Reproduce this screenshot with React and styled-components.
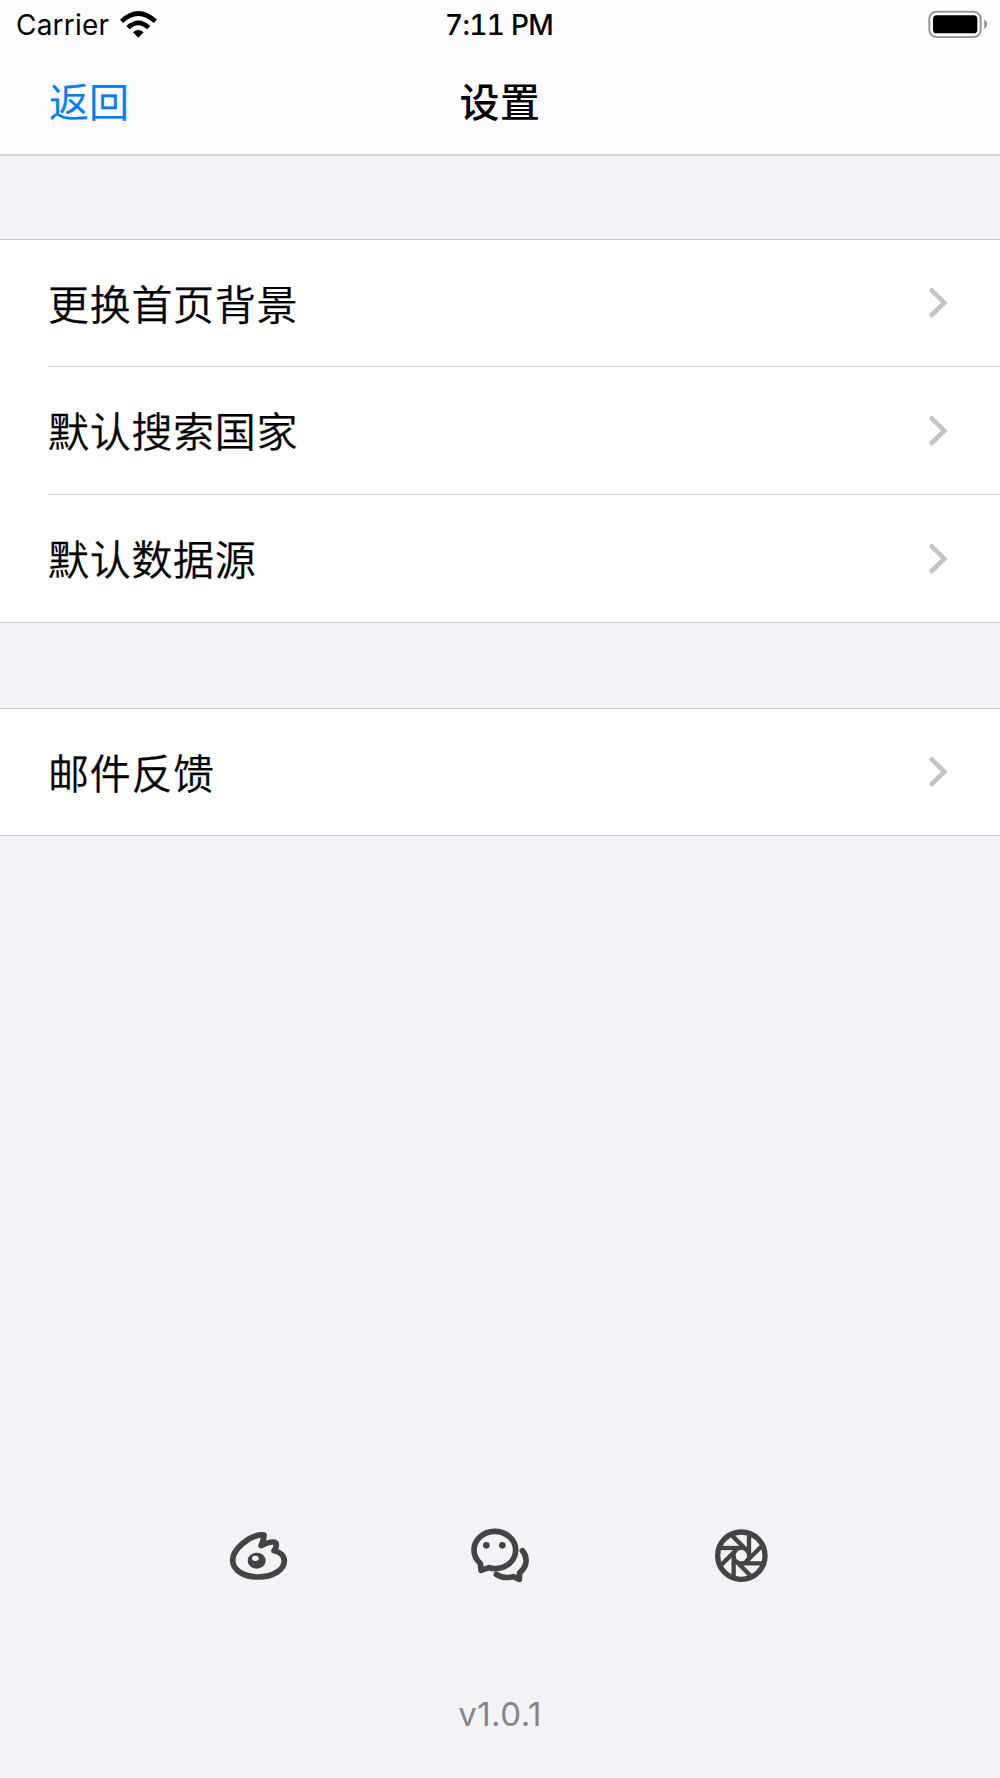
import React from 'react';
import styled, { createGlobalStyle } from 'styled-components';

const GlobalStyle = createGlobalStyle`
  * {
    box-sizing: border-box;
  }
  body {
    margin: 0;
    background-color: #f2f2f7;
    font-family: Inter, 'Noto Sans CJK SC', sans-serif;
    color: #000;
  }
`;

const Container = styled.div`
  width: 100%;
  height: 1778px;
  display: flex;
  flex-direction: column;
  background-color: #f2f2f7;
`;

const Header = styled.header`
  height: 156px;
  background-color: #fcfcfe;
  border-bottom: 2px solid #d4d4d7;
`;

const StatusBar = styled.div`
  height: 50px;
  display: grid;
  grid-template-columns: 1fr auto 1fr;
  align-items: center;
  padding: 0 13px 0 16px;
`;

const Signal = styled.div`
  display: flex;
  align-items: center;
  gap: 11px;
`;

const Carrier = styled.span`
  font-size: 28px;
  line-height: 50px;
  letter-spacing: 0.2px;
`;

const Clock = styled.span`
  margin-left: -5px;
  font-size: 28px;
  font-weight: 550;
  line-height: 50px;
  letter-spacing: -0.7px;
  font-variant-numeric: tabular-nums;
`;

const BatteryIcon = styled.svg`
  justify-self: end;
`;

const NavBar = styled.nav`
  height: 104px;
  display: grid;
  grid-template-columns: 1fr auto 1fr;
  align-items: center;
  padding: 0 49px 4px;
`;

const BackLink = styled.a`
  font-family: 'Noto Sans CJK SC', sans-serif;
  font-size: 40px;
  font-weight: 350;
  line-height: 60px;
  color: #007aff;
  -webkit-text-stroke: 0.25px;
`;

const Title = styled.h1`
  margin: 0;
  font-family: 'Noto Sans CJK SC', sans-serif;
  font-size: 40px;
  font-weight: 500;
  line-height: 60px;
  letter-spacing: 0.6px;
`;

const Section = styled.ul`
  list-style: none;
  margin: ${props => props.$top}px 0 0;
  padding: 0 0 0 48px;
  background-color: #fff;
  border-top: 1px solid #cbcbcd;
  border-bottom: 1px solid #cbcbcd;
`;

const Row = styled.li`
  height: ${props => props.$height}px;
  display: flex;
  align-items: center;
  justify-content: space-between;
  padding-right: 52px;

  & + & {
    border-top: 1px solid #d2d2d4;
  }
`;

const Label = styled.span`
  padding-bottom: 3px;
  font-family: 'Noto Sans CJK SC', sans-serif;
  font-size: 41px;
  font-weight: 350;
  line-height: 60px;
  letter-spacing: 0.7px;
  -webkit-text-stroke: 0.25px;
`;

const Footer = styled.footer`
  margin-top: auto;
  display: flex;
  flex-direction: column;
  align-items: center;
  padding-bottom: 39px;
`;

const Social = styled.div`
  display: flex;
  gap: 150px;
`;

const Version = styled.span`
  margin-top: 89px;
  font-size: 33px;
  font-weight: 370;
  line-height: 50px;
  letter-spacing: 0.5px;
  color: #858587;
`;

const Wifi = () => (
  <svg width="37" height="28" viewBox="0 0 111 84">
    <path d="M0 26Q55-26 111 26L101 36Q55-6 9 36Z" />
    <path d="M19 45Q55 12 91 45L81 55Q55 31 29 55Z" />
    <path d="M39 64Q55 50 71 64L55 80Z" />
  </svg>
);

const Battery = () => (
  <BatteryIcon width="60" height="30" viewBox="0 0 180 90">
    <rect x="7" y="5" width="154" height="76" rx="21" fill="#fff" stroke="#999" strokeWidth="6" />
    <rect x="18" y="16" width="133" height="54" rx="11" />
    <path d="M172 28Q180 34 180 43T172 58Z" fill="#8b8b8b" />
  </BatteryIcon>
);

const Chevron = () => (
  <svg width="19" height="32" viewBox="0 0 57 96" fill="none" stroke="#c4c4c6" strokeWidth="14" strokeLinecap="round">
    <path d="M8 10L46 47L8 84" strokeLinejoin="miter" />
  </svg>
);

const Weibo = () => (
  <svg width="90" height="90" viewBox="0 0 270 270">
    <path
      d="M147 75C101 72 53 121 53 150C53 182 88 201 130 201C174 201 208 179 208 153C208 138 197 126 177 122Q188 108 182 98Q170 92 138 107Q147 88 147 75Z"
      fill="none"
      stroke="#444"
      strokeWidth="17"
      strokeLinejoin="round"
    />
    <ellipse cx="125" cy="152" rx="27" ry="24" fill="#444" />
    <ellipse cx="121" cy="145" rx="10" ry="8" fill="#f2f2f7" />
  </svg>
);

const Wechat = () => (
  <svg width="90" height="90" viewBox="0 0 270 270">
    <g fill="none" stroke="#444" strokeWidth="17" strokeLinecap="round" strokeLinejoin="round">
      <path d="M78 181L76 160C64 150 57 135 57 120C57 89 85 64 119 64C154 64 182 89 182 120C182 152 154 176 119 176Q110 176 102 173Z" />
      <path d="M202 122C219 142 217 170 194 188L193 208L175 200C155 205 137 202 124 193" />
    </g>
    <circle cx="94" cy="106" r="10" fill="#444" />
    <circle cx="142" cy="106" r="10" fill="#444" />
  </svg>
);

const Aperture = () => (
  <svg width="90" height="90" viewBox="0 0 270 270" fill="none" stroke="#444">
    <circle cx="139" cy="137" r="71" strokeWidth="16" />
    <circle cx="139" cy="137" r="23" strokeWidth="11" />
    {[0, 45, 90, 135, 180, 225, 270, 315].map(angle => (
      <path key={angle} d="M162 137V76" strokeWidth="13" transform={`rotate(${angle} 139 137)`} />
    ))}
  </svg>
);

const sections = [
  { top: 83, rows: ['更换首页背景', '默认搜索国家', '默认数据源'] },
  { top: 85, rows: ['邮件反馈'] },
];

const App = () => (
  <>
    <GlobalStyle />
    <Container>
      <Header>
        <StatusBar>
          <Signal>
            <Carrier>Carrier</Carrier>
            <Wifi />
          </Signal>
          <Clock>7:11 PM</Clock>
          <Battery />
        </StatusBar>
        <NavBar>
          <BackLink>返回</BackLink>
          <Title>设置</Title>
        </NavBar>
      </Header>
      {sections.map(section => (
        <Section key={section.top} $top={section.top}>
          {section.rows.map((row, index) => (
            <Row key={row} $height={index === 0 ? 126 : 128}>
              <Label>{row}</Label>
              <Chevron />
            </Row>
          ))}
        </Section>
      ))}
      <Footer>
        <Social>
          <Weibo />
          <Wechat />
          <Aperture />
        </Social>
        <Version>v1.0.1</Version>
      </Footer>
    </Container>
  </>
);

export default App;
